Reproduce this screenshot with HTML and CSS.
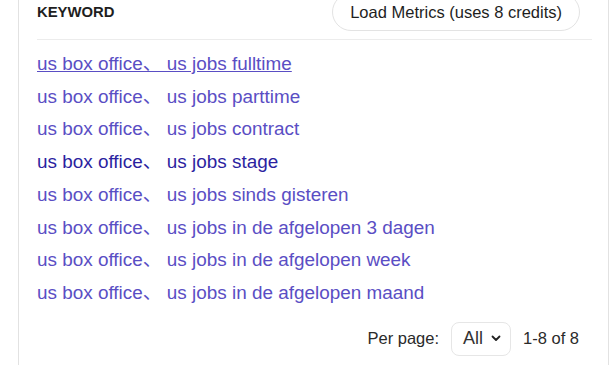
FILE: index.html
```html
<!DOCTYPE html>
<html lang="en">
<head>
    <meta charset="UTF-8">
    <title>Keywords</title>
    <link rel="stylesheet" href="styles.css">
</head>
<body>

<div class="card">
    <div class="card-head">
        <span class="col-title">KEYWORD</span>
        <button class="btn-metrics">Load Metrics (uses 8 credits)</button>
    </div>

    <ul class="kw-list">
        <li><a href="#" class="hover">us box office、 us jobs fulltime</a></li>
        <li><a href="#">us box office、 us jobs parttime</a></li>
        <li><a href="#">us box office、 us jobs contract</a></li>
        <li><a href="#" class="visited">us box office、 us jobs stage</a></li>
        <li><a href="#">us box office、 us jobs sinds gisteren</a></li>
        <li><a href="#">us box office、 us jobs in de afgelopen 3 dagen</a></li>
        <li><a href="#">us box office、 us jobs in de afgelopen week</a></li>
        <li><a href="#">us box office、 us jobs in de afgelopen maand</a></li>
    </ul>

    <div class="pager">
        <span>Per page:</span>
        <div class="per-page">
            All
            <svg width="10" height="7" viewBox="0 0 10 7"><path d="M1.5 1.5 L5 5 L8.5 1.5" fill="none" stroke="#222" stroke-width="1.8" stroke-linecap="round" stroke-linejoin="round"/></svg>
        </div>
        <span>1-8 of 8</span>
    </div>
</div>

</body>
</html>
```

FILE: styles.css
```css
body {
    margin: 0;
    background: #fff;
    font-family: 'Liberation Sans', Arial, 'Noto Sans CJK SC', sans-serif;
    color: #222;
    overflow: hidden;
}
.card {
    box-sizing: border-box;
    margin: -8px 0 0 18px;
    width: 591px;
    height: 373px;
    padding: 0 16px 0 18px;
    border-left: 1px solid #e2e2e2;
    border-right: 1px solid #e2e2e2;
}
.card-head {
    display: flex;
    justify-content: space-between;
    align-items: center;
    padding: 1px 13px 8px 0;
    border-bottom: 1px solid #ececec;
}
.col-title {
    font-weight: bold;
    font-size: 14.85px;
    color: #1e1e1e;
}
.btn-metrics {
    height: 38px;
    padding: 0 17px;
    margin-right: -1px;
    background: #fff;
    border: 1px solid #e3e3e3;
    border-radius: 19px;
    font-family: inherit;
    font-size: 16.5px;
    color: #1e1e1e;
}
.kw-list {
    list-style: none;
    margin: 0;
    padding: 8px 0 0;
}
.kw-list li {
    font-size: 18.9px;
    line-height: 32.7px;
}
.kw-list a {
    color: #5a4ec4;
    text-decoration: none;
}
.kw-list a.hover {
    text-decoration: underline;
}
.kw-list a.visited {
    color: #2c1fa0;
}
.pager {
    display: flex;
    justify-content: flex-end;
    align-items: center;
    gap: 12px;
    margin-top: 12px;
    padding-right: 13px;
    font-size: 16.5px;
    color: #2a2a2a;
}
.per-page {
    display: flex;
    align-items: center;
    gap: 8px;
    box-sizing: border-box;
    width: 60px;
    height: 34px;
    padding-left: 11px;
    border: 1px solid #e6e6e6;
    border-radius: 8px;
    font-size: 18px;
    color: #333;
}
```
